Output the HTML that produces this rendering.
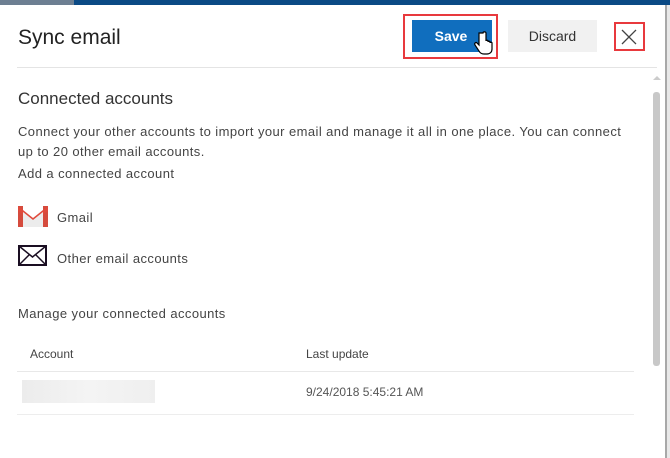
<!DOCTYPE html>
<html><head><style>
body{margin:0;width:670px;height:458px;overflow:hidden;background:#fff;font-family:"Liberation Sans",sans-serif;position:relative;color:#333}
.a{position:absolute}
.t{position:absolute;white-space:nowrap}
.b{letter-spacing:0.42px}
</style></head><body>
<div class="a" style="left:0;top:0;width:74px;height:5px;background:#6d7f92"></div>
<div class="a" style="left:74px;top:0;width:596px;height:5px;background:#0b4a85"></div>
<div class="a" style="left:665px;top:5px;width:5px;height:453px;background:#a8a8a8"></div>
<div class="a" style="left:667px;top:5px;width:3px;height:453px;background:#e8e8e8"></div>
<div class="t" style="left:18px;top:26px;font-size:21px;color:#222">Sync email</div>
<div class="a" style="left:403px;top:14px;width:95px;height:45px;border:2px solid #e8393d;box-sizing:border-box"></div>
<div class="a" style="left:412px;top:20px;width:80px;height:32px;background:#106ebe;color:#fff;font-weight:bold;font-size:14px;text-align:center;line-height:32px;padding-right:2px;box-sizing:border-box">Save</div>
<svg class="a" style="left:474px;top:31px" width="20" height="26" viewBox="0 0 20 26"><path d="M5 2v12l-2-2c-1-1-3 0-2 2l4 6c1 2 3 3 5 3h3c3 0 5-2 5-5v-6c0-1-2-1-2 0v-1c0-1-2-1-2 0v-1c0-1-2-1-2 0V2c0-1.5-3-1.5-3 0z" fill="#fff" stroke="#000" stroke-width="1.2"/></svg>
<div class="a" style="left:508px;top:20px;width:89px;height:32px;background:#f1f1f1;color:#333;font-size:14px;text-align:center;line-height:32px">Discard</div>
<div class="a" style="left:614px;top:22px;width:31px;height:29px;border:2px solid #e8393d;box-sizing:border-box"></div>
<svg class="a" style="left:621px;top:29px" width="16" height="16"><path d="M1 1L15 15M15 1L1 15" stroke="#444" stroke-width="1.3"/></svg>
<div class="a" style="left:17px;top:67px;width:640px;height:1px;background:#e4e4e4"></div>
<div class="a" style="left:653px;top:76px;width:0;height:0;border-left:4px solid transparent;border-right:4px solid transparent;border-bottom:4px solid #ccc"></div>
<div class="a" style="left:653px;top:92px;width:7px;height:274px;background:#c8c8c8;border-radius:3px"></div>
<div class="t" style="left:18px;top:89px;font-size:17px;color:#333">Connected accounts</div>
<div class="t b" style="left:18px;top:122px;font-size:13px;color:#444;line-height:20px">Connect your other accounts to import your email and manage it all in one place. You can connect<br>up to 20 other email accounts.</div>
<div class="t b" style="left:18px;top:166px;font-size:13px;color:#444">Add a connected account</div>
<svg class="a" style="left:18px;top:204px" width="30" height="23" viewBox="0 0 30 23"><path d="M0 2h5v21H0z M25 2h5v21h-5z" fill="#d54b3d"/><path d="M0 2l15 12L30 2v5L15 17 0 7z" fill="#e04a3c"/><path d="M5 8l10 8 10-8v15H5z" fill="#ececec"/></svg>
<div class="t b" style="left:57px;top:210px;font-size:13px;color:#444">Gmail</div>
<svg class="a" style="left:18px;top:245px" width="29" height="21" viewBox="0 0 29 21"><rect x="1" y="1" width="27" height="19" fill="#fff" stroke="#1a0e22" stroke-width="2"/><path d="M1 1l13.5 11L28 1M1 20l10-10M28 20L18 10" stroke="#1a0e22" stroke-width="1.5" fill="none"/></svg>
<div class="t b" style="left:57px;top:251px;font-size:13px;color:#444">Other email accounts</div>
<div class="t b" style="left:18px;top:306px;font-size:13px;color:#444">Manage your connected accounts</div>
<div class="t" style="left:30px;top:347px;font-size:12px;color:#444">Account</div>
<div class="t" style="left:306px;top:347px;font-size:12px;color:#444">Last update</div>
<div class="a" style="left:17px;top:371px;width:617px;height:1px;background:#e8e8e8"></div>
<div class="a" style="left:22px;top:380px;width:133px;height:23px;background:linear-gradient(90deg,#ececec,#f4f4f4,#efefef)"></div>
<div class="t" style="left:306px;top:385px;font-size:12px;color:#555">9/24/2018 5:45:21 AM</div>
<div class="a" style="left:17px;top:414px;width:617px;height:1px;background:#ededed"></div>
</body></html>
